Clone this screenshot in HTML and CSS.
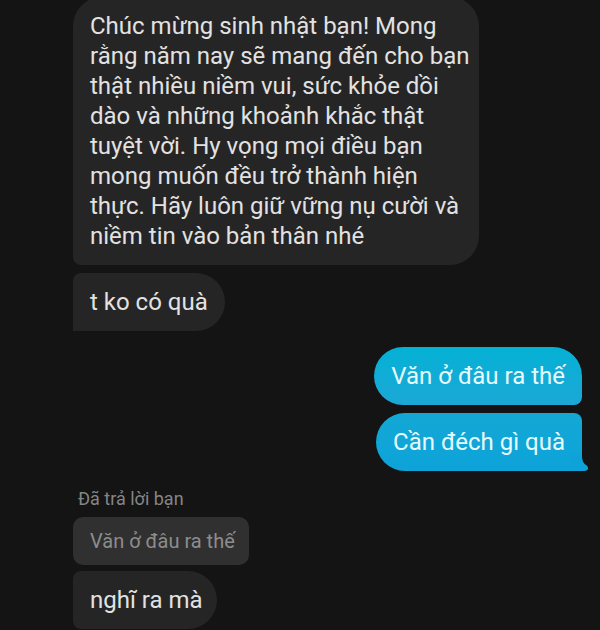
FILE: index.html
```html
<!DOCTYPE html>
<html lang="vi">
<head>
    <meta charset="UTF-8">
    <meta name="viewport" content="width=device-width, initial-scale=1.0">
    <title>Tin nhắn</title>
    <link rel="stylesheet" href="styles.css">
</head>
<body>
    <main class="chat">
        <div class="group received">
            <p class="bubble first long">Chúc mừng sinh nhật bạn! Mong<br>rằng năm nay sẽ mang đến cho bạn<br>thật nhiều niềm vui, sức khỏe dồi<br>dào và những khoảnh khắc thật<br>tuyệt vời. Hy vọng mọi điều bạn<br>mong muốn đều trở thành hiện<br>thực. Hãy luôn giữ vững nụ cười và<br>niềm tin vào bản thân nhé</p>
            <p class="bubble last">t ko có quà</p>
        </div>

        <div class="group sent">
            <p class="bubble first">Văn ở đâu ra thế</p>
            <p class="bubble last">Cần đéch gì quà
                <svg class="tail" width="16" height="16" viewBox="0 0 16 16" aria-hidden="true">
                    <path d="M0 0H10C10 5 11 8 14 10C17 12 17 16 12 16H0Z" fill="#0da3d9"/>
                </svg>
            </p>
        </div>

        <div class="group received replies">
            <span class="reply-label">Đã trả lời bạn</span>
            <blockquote class="quote">Văn ở đâu ra thế</blockquote>
            <p class="bubble middle">nghĩ ra mà</p>
        </div>
    </main>
</body>
</html>
```

FILE: styles.css
```css
* {
    box-sizing: border-box;
}
body {
    margin: 0;
    background: #141414;
    color: #e2e2e2;
    font-family: Roboto, "Noto Sans", sans-serif;
    font-size: 24px;
    line-height: 30px;
    overflow: hidden;
}
.chat {
    display: flex;
    flex-direction: column;
    gap: 16px;
    margin-top: -3px;
    padding: 0 18px 0 73px;
}
.group {
    display: flex;
    flex-direction: column;
    gap: 8px;
}
.replies {
    gap: 6px;
}
.received {
    align-items: flex-start;
}
.sent {
    align-items: flex-end;
}
.bubble {
    position: relative;
    margin: 0;
    padding: 14px 17px;
    border-radius: 29px;
    background: #252525;
}
.long {
    padding-right: 9px;
}
.received .first {
    border-bottom-left-radius: 8px;
}
.received .middle {
    padding-right: 14px;
    border-top-left-radius: 8px;
    border-bottom-left-radius: 8px;
}
.received .last {
    border-top-left-radius: 8px;
    border-bottom-left-radius: 0;
}
.sent .bubble {
    color: #e6fbff;
}
.sent .first {
    border-bottom-right-radius: 8px;
    background: linear-gradient(#04b1d5, #1ca8d6);
}
.sent .last {
    border-top-right-radius: 8px;
    border-bottom-right-radius: 0;
    background: linear-gradient(#13a8d4, #0da3d9);
}
.tail {
    position: absolute;
    right: -6px;
    bottom: 0;
}
.reply-label {
    padding-left: 5px;
    color: #858585;
    font-size: 18px;
    line-height: 24px;
}
.quote {
    margin: 0;
    padding: 12px 14px 12px 17px;
    border-radius: 10px;
    background: #303030;
    color: #8d8d8d;
    font-size: 20px;
    line-height: 24px;
}
```
